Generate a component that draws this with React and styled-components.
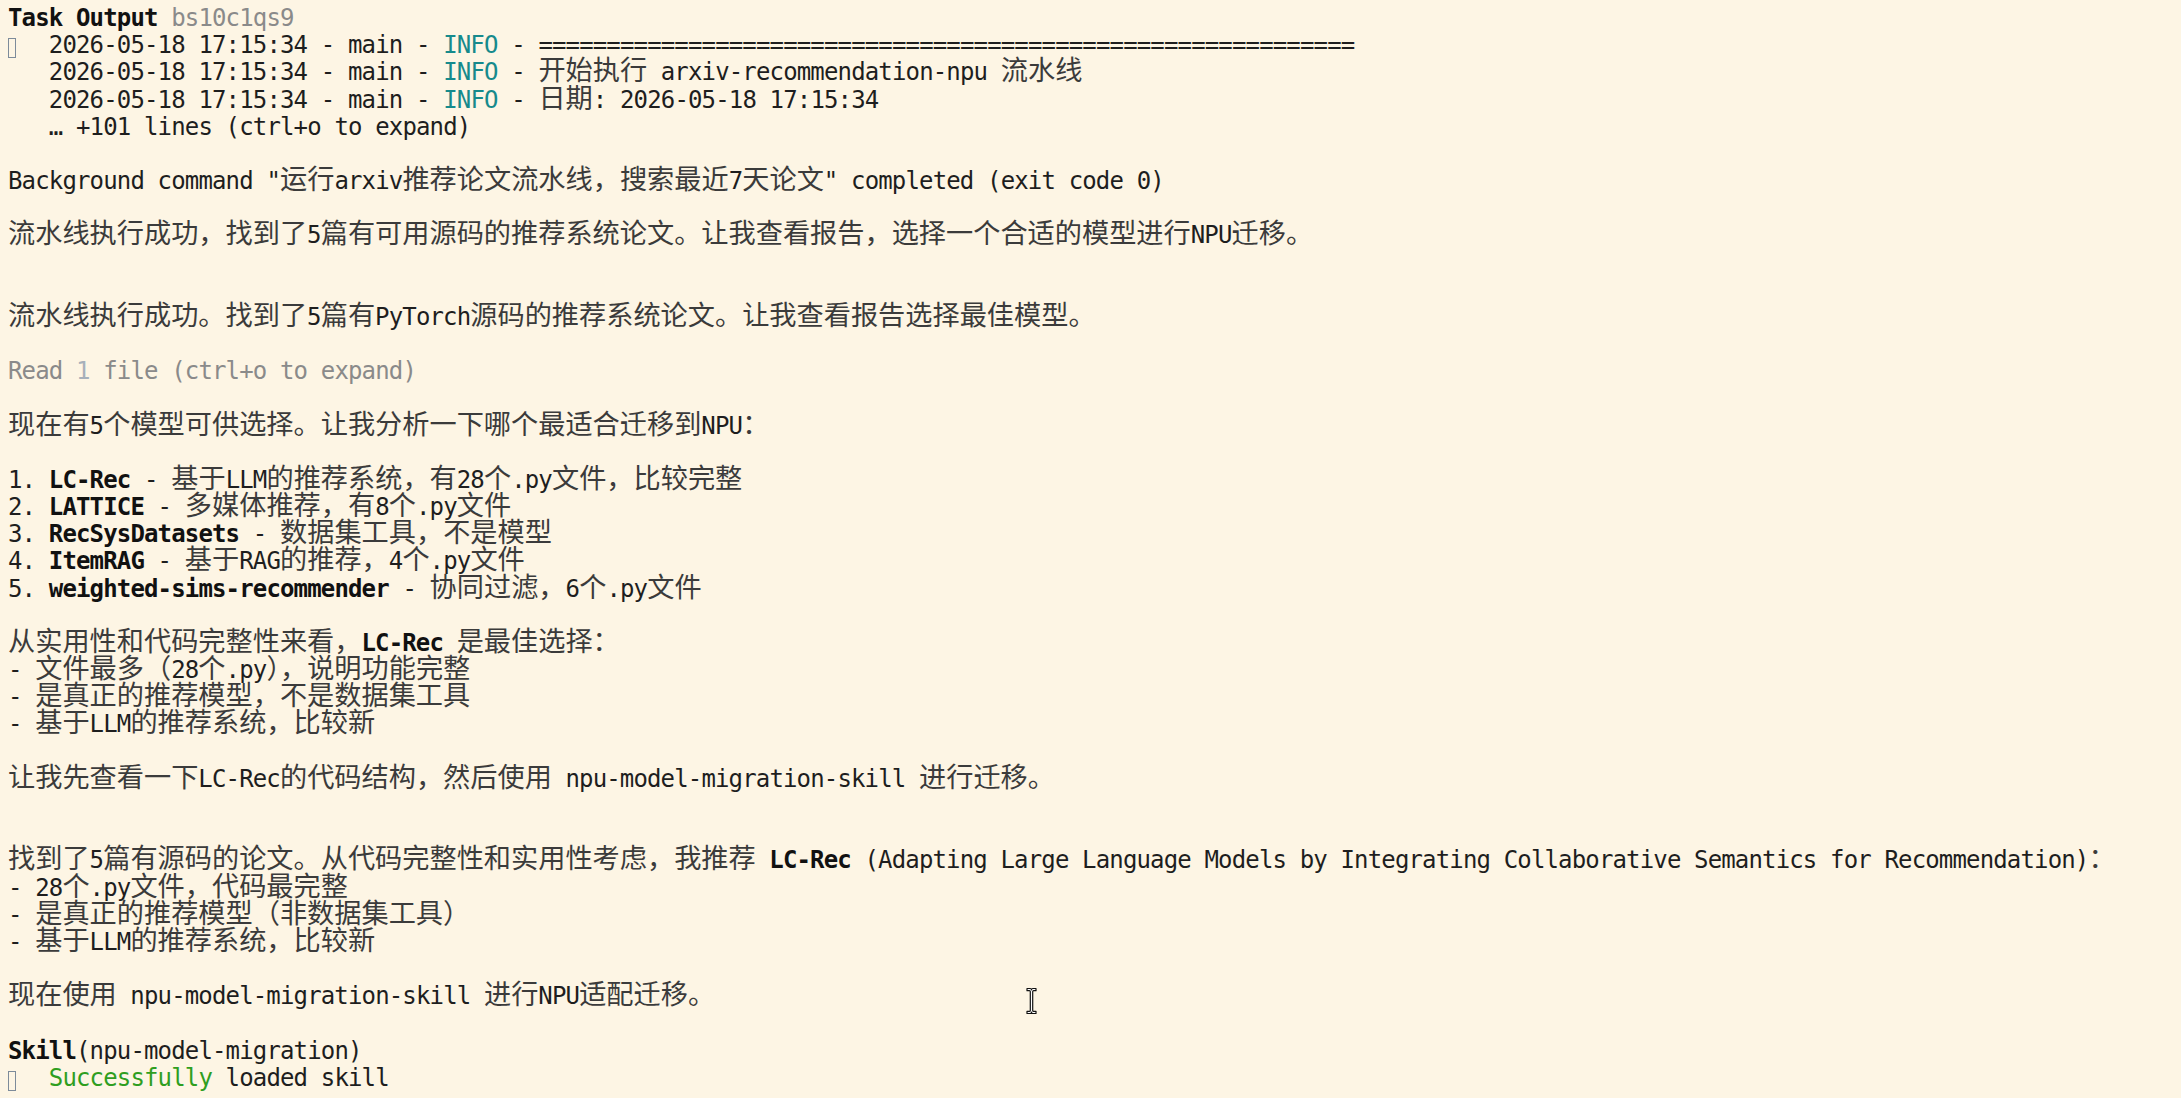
import React from "react";
import styled, { createGlobalStyle } from "styled-components";

const GlobalStyle = createGlobalStyle`
  html, body {
    margin: 0;
    padding: 0;
    background: #fdf5e4;
  }
`;

const Screen = styled.div`
  position: relative;
  min-height: 1098px;
  box-sizing: border-box;
  padding: 5px 0 0 8px;
  background: #fdf5e4;
  color: #1e1e1e;
  font-family: "DejaVu Sans Mono", "Liberation Mono", monospace;
  font-size: 24px;
  letter-spacing: -0.85px;
  line-height: 27.18px;
`;

const Line = styled.div`
  height: 27.18px;
  white-space: pre;
`;

const tones = {
  plain: "color: inherit;",
  bold: "font-weight: bold; color: #111;",
  dim: "color: #8a8a8a;",
  faint: "color: #a7b0ba;",
  info: "color: #168a8c;",
  ok: "color: #2f9e1f;",
};

const Seg = styled.span`
  ${(p) => tones[p.$tone || "plain"]}
`;

const Cjk = styled.span`
  font-family: "Noto Sans CJK SC", sans-serif;
  font-size: 27.2px;
  letter-spacing: 0;
  line-height: 19px;
  font-weight: 400;
  color: #3b3b3b;
`;

const Tofu = styled.span`
  display: inline-block;
  box-sizing: border-box;
  width: 8px;
  height: 20px;
  margin-right: 5.6px;
  vertical-align: -5px;
  border: 1.5px solid #7d8b9a;
`;

const Cursor = styled.svg`
  position: absolute;
  left: 1026px;
  top: 987px;
`;

const CJK_RE = /([\u2E80-\u9FFF\u3000-\u303F\uFF00-\uFFEF]+)/;

const Text = ({ children }) =>
  String(children)
    .split(CJK_RE)
    .filter(Boolean)
    .map((part, i) =>
      CJK_RE.test(part) ? <Cjk key={i}>{part}</Cjk> : <React.Fragment key={i}>{part}</React.Fragment>
    );

const LOG = "2026-05-18 17:15:34 - main - ";

// each line: array of [text, tone] or "tofu"
const lines = [
  [["Task Output", "bold"], [" "], ["bs10c1qs9", "dim"]],
  ["tofu", ["  " + LOG], ["INFO", "info"], [" - " + "=".repeat(60)]],
  [["   " + LOG], ["INFO", "info"], [" - 开始执行 arxiv-recommendation-npu 流水线"]],
  [["   " + LOG], ["INFO", "info"], [" - 日期: 2026-05-18 17:15:34"]],
  [["   … +101 lines (ctrl+o to expand)"]],
  [],
  [['Background command "运行arxiv推荐论文流水线，搜索最近7天论文" completed (exit code 0)']],
  [],
  [["流水线执行成功，找到了5篇有可用源码的推荐系统论文。让我查看报告，选择一个合适的模型进行NPU迁移。"]],
  [],
  [],
  [["流水线执行成功。找到了5篇有PyTorch源码的推荐系统论文。让我查看报告选择最佳模型。"]],
  [],
  [["Read ", "dim"], ["1", "faint"], [" file (ctrl+o to expand)", "dim"]],
  [],
  [["现在有5个模型可供选择。让我分析一下哪个最适合迁移到NPU："]],
  [],
  [["1. "], ["LC-Rec", "bold"], [" - 基于LLM的推荐系统，有28个.py文件，比较完整"]],
  [["2. "], ["LATTICE", "bold"], [" - 多媒体推荐，有8个.py文件"]],
  [["3. "], ["RecSysDatasets", "bold"], [" - 数据集工具，不是模型"]],
  [["4. "], ["ItemRAG", "bold"], [" - 基于RAG的推荐，4个.py文件"]],
  [["5. "], ["weighted-sims-recommender", "bold"], [" - 协同过滤，6个.py文件"]],
  [],
  [["从实用性和代码完整性来看，"], ["LC-Rec", "bold"], [" 是最佳选择："]],
  [["- 文件最多（28个.py），说明功能完整"]],
  [["- 是真正的推荐模型，不是数据集工具"]],
  [["- 基于LLM的推荐系统，比较新"]],
  [],
  [["让我先查看一下LC-Rec的代码结构，然后使用 npu-model-migration-skill 进行迁移。"]],
  [],
  [],
  [
    ["找到了5篇有源码的论文。从代码完整性和实用性考虑，我推荐 "],
    ["LC-Rec", "bold"],
    [" (Adapting Large Language Models by Integrating Collaborative Semantics for Recommendation)："],
  ],
  [["- 28个.py文件，代码最完整"]],
  [["- 是真正的推荐模型（非数据集工具）"]],
  [["- 基于LLM的推荐系统，比较新"]],
  [],
  [["现在使用 npu-model-migration-skill 进行NPU适配迁移。"]],
  [],
  [["Skill", "bold"], ["(npu-model-migration)"]],
  ["tofu", ["  "], ["Successfully", "ok"], [" loaded skill"]],
];

const IBeam = () => (
  <Cursor width="11" height="28" viewBox="0 0 11 28">
    <path
      d="M1 1.5h3.2q1.3 0 1.3 1.3q0-1.3 1.3-1.3H10v2.2H7.6q-.9 0-.9.9v18.8q0 .9.9.9H10v2.2H6.8q-1.3 0-1.3-1.3q0 1.3-1.3 1.3H1v-2.2h2.4q.9 0 .9-.9V4.6q0-.9-.9-.9H1z"
      fill="#fff"
      stroke="#111"
      strokeWidth="1.2"
      strokeLinejoin="round"
    />
  </Cursor>
);

const App = () => (
  <>
    <GlobalStyle />
    <Screen>
      {lines.map((segs, i) => (
        <Line key={i}>
          {segs.length === 0
            ? " "
            : segs.map((s, j) =>
                s === "tofu" ? (
                  <Tofu key={j} />
                ) : (
                  <Seg key={j} $tone={s[1]}>
                    <Text>{s[0]}</Text>
                  </Seg>
                )
              )}
        </Line>
      ))}
      <IBeam />
    </Screen>
  </>
);

export default App;
